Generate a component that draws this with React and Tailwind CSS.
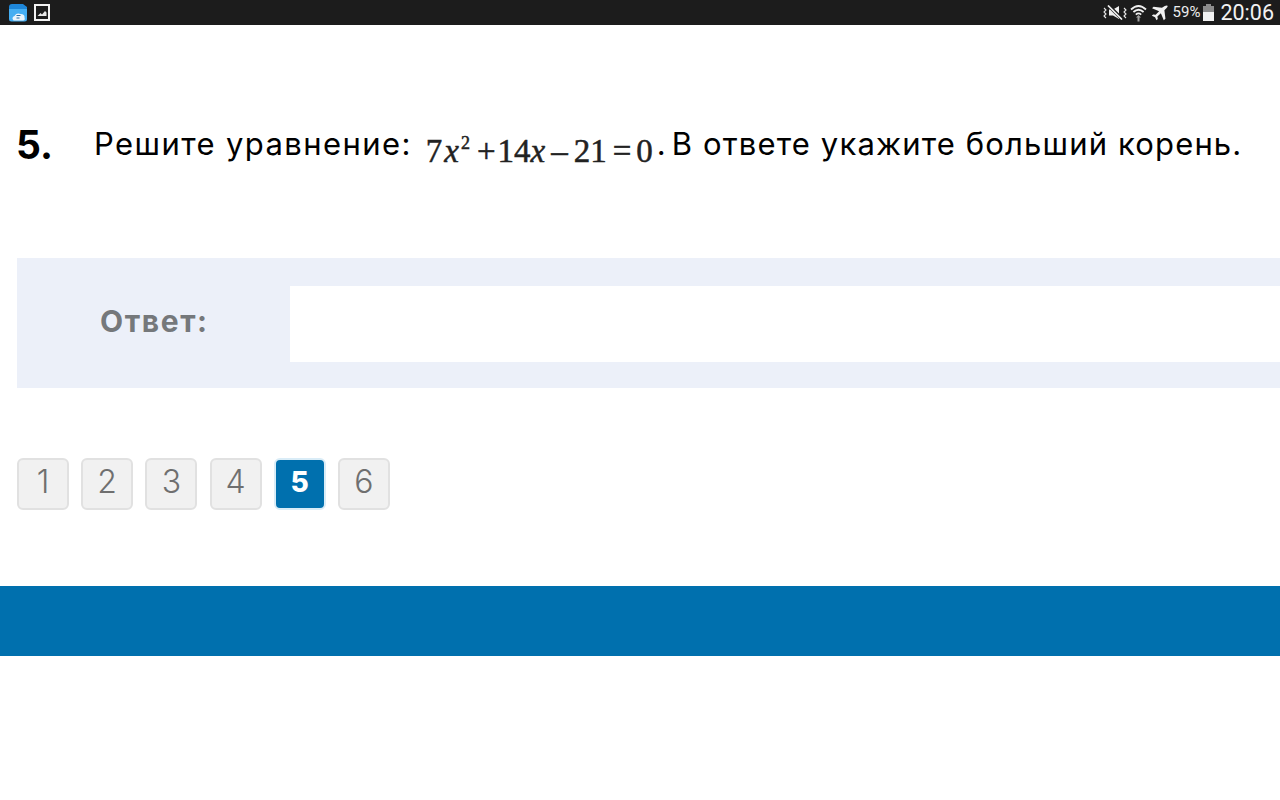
import React from 'react';

const pages = [1, 2, 3, 4, 5, 6];

const FolderIcon = () => (
    <svg width="20" height="19" viewBox="0 0 20 19" className="block">
        <path d="M1 4 Q1 1 4 1 H15 L19 4 V7 H1 Z" fill="#1e86d8" />
        <path d="M1 6 H19 V16 Q19 18.5 16.5 18.5 H3.5 Q1 18.5 1 16 Z" fill="#45aef2" />
        <path d="M5.5 17.5 Q3 14.5 6.5 13 Q8.5 9.5 12.5 11 Q17 11 16.5 14.5 Q17.5 17.5 15 17.5 Z" fill="#eaf4fb" />
        <path d="M8.5 12.5 H12.5 M8.5 15 H11.5" stroke="#2a6ea6" strokeWidth="1" />
    </svg>
);

const ImageIcon = () => (
    <svg width="16" height="17" viewBox="0 0 16 17" className="block">
        <rect x="0" y="0" width="16" height="17" fill="#f2f2f2" />
        <rect x="2" y="2" width="12" height="13" fill="#1c1c1c" />
        <path d="M3.5 12 L6.5 9 L8 10.5 L11 7 L12.5 8.5 V12 Z" fill="#e8e8e8" />
    </svg>
);

const MuteIcon = () => (
    <svg width="25" height="15" viewBox="0 0 25 15" fill="none" className="block">
        <path d="M1 3 L3 5 L1 7 L3 9 L1 11 L3 13" stroke="#e8e8e8" strokeWidth="1.1" />
        <path d="M6 4.5 H10 L16 1 V14 L10 10.5 H6 Z" fill="#f0f0f0" />
        <path d="M5 0 L19 14" stroke="#1c1c1c" strokeWidth="3.4" />
        <path d="M5 0.5 L19 14.5" stroke="#f0f0f0" strokeWidth="1.7" />
        <path d="M21 3 L23 5 L21 7 L23 9 L21 11 L23 13" stroke="#e8e8e8" strokeWidth="1.1" />
    </svg>
);

const WifiIcon = () => (
    <svg width="17" height="18" viewBox="0 0 17 18" fill="none" className="block">
        <path d="M1 5.5 Q8.5 -1.5 16 5.5" stroke="#f0f0f0" strokeWidth="1.8" />
        <path d="M3.4 8 Q8.5 3.4 13.6 8" stroke="#f0f0f0" strokeWidth="1.8" />
        <path d="M5.8 10.6 Q8.5 8.2 11.2 10.6" stroke="#f0f0f0" strokeWidth="1.8" />
        <path d="M8.5 11 L11 13.5 H9.5 V17.5 H7.5 V13.5 H6 Z" fill="#a0a0a0" />
    </svg>
);

const PlaneIcon = () => (
    <svg width="17" height="16" viewBox="0 0 16 15" className="block">
        <path d="M14.8 0.4 Q15.9 0.4 15.6 1.7 Q15.3 2.6 12.6 5 L13.6 13 L12 14.4 L9.3 7.8 L6 10.8 L6.4 13.2 L5.2 14.4 L3.8 11.4 L0.8 10 L2 8.8 L4.4 9.2 L7.6 5.8 L1 3 L2.4 1.6 L10.3 2.6 Q13.4 0.4 14.8 0.4 Z" fill="#f0f0f0" />
    </svg>
);

const BatteryIcon = () => (
    <div className="flex flex-col items-center w-[11px]">
        <div className="w-[5px] h-[2px] bg-[#8c8c8c]" />
        <div className="w-[11px] h-[6px] bg-[#8c8c8c]" />
        <div className="w-[11px] h-[9px] bg-[#f2f2f2]" />
    </div>
);

const App = () => {
    return (
        <div className="w-[1280px] h-[800px] overflow-hidden bg-white font-['Inter','Noto_Sans',sans-serif]">
            {/* Status bar */}
            <div className="h-[25px] bg-[#1c1c1c] flex items-center justify-between pl-[8px] pr-[6px]">
                <div className="flex items-center gap-[6px]">
                    <FolderIcon />
                    <ImageIcon />
                </div>
                <div className="flex items-center">
                    <MuteIcon />
                    <div className="ml-[2px]"><WifiIcon /></div>
                    <div className="ml-[4px]"><PlaneIcon /></div>
                    <span className="ml-[5px] text-[15px] text-[#ececec] font-['Roboto',sans-serif]">59%</span>
                    <div className="ml-[3px]"><BatteryIcon /></div>
                    <span className="ml-[6px] text-[21.5px] leading-none text-[#f2f2f2] font-['Roboto',sans-serif]">20:06</span>
                </div>
            </div>

            {/* Question */}
            <div className="flex items-center pl-[16px] mt-[94px] h-[50px] text-black">
                <span className="w-[78px] text-[39px] font-bold leading-none">5.</span>
                <span className="text-[31px] whitespace-nowrap tracking-[1.4px]">Решите уравнение:</span>
                <span className="ml-[14px] mt-[14px] w-[231px] shrink-0 text-[33px] leading-none whitespace-nowrap text-[#222] [-webkit-text-stroke:0.5px_#222] font-['Liberation_Serif',serif]">
                    7<i className="ml-[2px]">x</i><sup className="text-[18px] -top-[13px] ml-[2px]">2</sup>
                    <span className="ml-[7px]">+</span><span className="ml-[2px]">14</span><i>x</i>
                    <span className="ml-[6px]">–</span><span className="ml-[6px]">21</span>
                    <span className="ml-[6px]">=</span><span className="ml-[5px]">0</span>
                </span>
                <span className="text-[31px] whitespace-pre tracking-[1.15px]"><span className="tracking-[-1.35px]">. </span>В ответе укажите больший корень.</span>
            </div>

            {/* Answer */}
            <div className="ml-[17px] mt-[89px] h-[130px] bg-[#ecf0f9] flex items-center">
                <div className="w-[273px] pl-[83px] pb-[3px] text-[30px] font-bold tracking-[1.6px] text-[#75787b]">Ответ:</div>
                <div className="flex-1 h-[76px] mt-[1px] bg-white" />
            </div>

            {/* Pagination */}
            <div className="flex ml-[17px] mt-[70px] gap-[12.2px]">
                {pages.map((page) => (
                    <div
                        key={page}
                        className={page === 5
                            ? 'w-[52px] h-[52px] rounded-[6px] border-2 border-[#d9ecf7] bg-[#0070ae] text-white font-extrabold text-[28px] pb-[4px] flex items-center justify-center'
                            : 'w-[52px] h-[52px] rounded-[6px] border-2 border-[#e1e1e1] bg-[#f1f1f1] text-[#6f6f6f] font-light text-[32px] pb-[4px] flex items-center justify-center'}
                    >
                        {page}
                    </div>
                ))}
            </div>

            {/* Footer band */}
            <div className="mt-[76px] h-[70px] bg-[#0070ae]" />
        </div>
    );
};

export default App;
